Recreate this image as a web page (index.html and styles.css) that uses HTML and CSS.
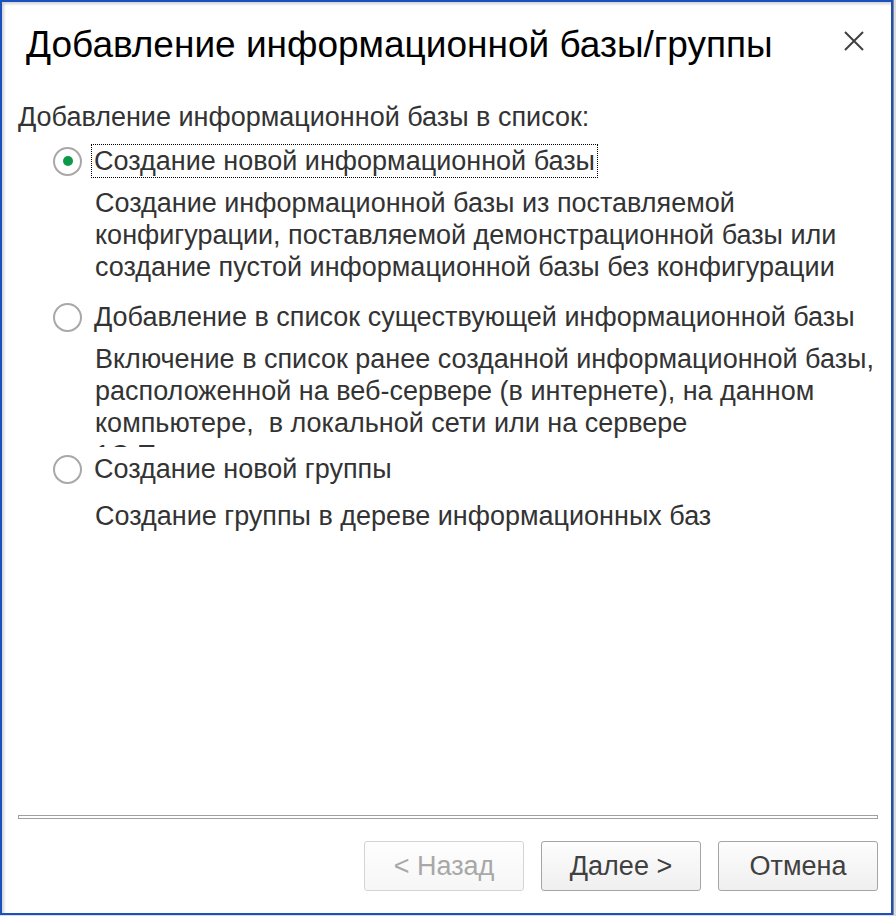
FILE: index.html
```html
<!DOCTYPE html>
<html lang="ru">
<head>
    <meta charset="UTF-8">
    <title>Добавление информационной базы/группы</title>
    <link rel="stylesheet" href="styles.css">
</head>
<body>
    <div class="window">
        <div class="header">
            <h1 class="title">Добавление информационной базы/группы</h1>
            <span class="close-button">
                <svg width="20" height="20" viewBox="0 0 20 20"><path d="M1 1L19 19M19 1L1 19" stroke="#404040" stroke-width="2"/></svg>
            </span>
        </div>

        <div class="content">
            <div class="subtitle">Добавление информационной базы в список:</div>

            <div class="option">
                <div class="option-row">
                    <span class="radio checked"></span>
                    <span class="option-label focused">Создание новой информационной базы</span>
                </div>
                <div class="option-desc">Создание информационной базы из поставляемой<br>конфигурации, поставляемой демонстрационной базы или<br>создание пустой информационной базы без конфигурации</div>
            </div>

            <div class="option">
                <div class="option-row">
                    <span class="radio"></span>
                    <span class="option-label">Добавление в список существующей информационной базы</span>
                </div>
                <!-- текст не помещается и обрезается, как в оригинале -->
                <div class="option-desc clipped">Включение в список ранее созданной информационной базы,<br>расположенной на веб-сервере (в интернете), на данном<br>компьютере,&nbsp; в локальной сети или на сервере<br>1С:Предприятия</div>
            </div>

            <div class="option">
                <div class="option-row">
                    <span class="radio"></span>
                    <span class="option-label">Создание новой группы</span>
                </div>
                <div class="option-desc single">Создание группы в дереве информационных баз</div>
            </div>
        </div>

        <div class="footer">
            <div class="separator"></div>
            <div class="buttons">
                <button class="btn" disabled>&lt; Назад</button>
                <button class="btn">Далее &gt;</button>
                <button class="btn">Отмена</button>
            </div>
        </div>
    </div>
</body>
</html>
```

FILE: styles.css
```css
/* Окно мастера добавления базы */
body {
    margin: 0;
    background-color: #dcdcdc;
    font-family: 'Liberation Sans', Arial, sans-serif;
    color: #333;
}

.window {
    box-sizing: border-box;
    width: 893px;
    height: 915px;
    background: #fff;
    border: 2px solid #1b50bf;
    outline: 1px solid #8a8a8a;
    box-shadow: inset 2px 2px 3px rgba(0, 0, 0, 0.18);
    display: flex;
    flex-direction: column;
}

.header {
    display: flex;
    align-items: center;
    justify-content: space-between;
    padding: 20px 27px 0 24px;
    height: 46px;
}

.title {
    margin: 0;
    font-size: 37px;
    font-weight: normal;
    color: #000;
    line-height: 46px;
}

.close-button {
    display: flex;
    margin-top: -8px;
    cursor: pointer;
}

.content {
    padding: 34px 0 0 16px;
}

.subtitle {
    font-size: 27px;
    line-height: 30px;
    margin-bottom: 12px;
}

.option-row {
    display: flex;
    align-items: center;
    height: 34px;
}

.radio {
    box-sizing: border-box;
    width: 29px;
    height: 29px;
    margin-left: 35px;
    margin-right: 9px;
    border: 2px solid #a8a8a8;
    border-radius: 50%;
    display: flex;
    align-items: center;
    justify-content: center;
}

.radio.checked::after {
    content: '';
    width: 10px;
    height: 10px;
    border-radius: 50%;
    background-color: #0a9a4a;
}

.option-label {
    font-size: 27px;
    line-height: 32px;
    padding: 0 2px;
    border: 1px dotted transparent;
}

.option-label.focused {
    border-color: #000;
}

.option-desc {
    margin: 9px 0 17px 77px;
    max-height: 104px;
    overflow: hidden;
    font-size: 27px;
    line-height: 32px;
}

.option-desc.clipped {
    margin-bottom: 5px;
}

.option-desc.single {
    margin-top: 14px;
}

.footer {
    margin-top: auto;
    padding: 0 13px 22px 16px;
}

.separator {
    height: 2px;
    border: 1px solid #a0a0a0;
    margin-bottom: 22px;
}

.buttons {
    display: flex;
    justify-content: flex-end;
    gap: 17px;
}

.btn {
    width: 160px;
    height: 50px;
    font-family: 'Liberation Sans', Arial, sans-serif;
    font-size: 27px;
    color: #404040;
    background: linear-gradient(#fdfdfd, #efefef);
    border: 1px solid #a5a5a5;
    border-radius: 3px;
    cursor: pointer;
}

.btn:disabled {
    color: #a8a8a8;
    border-color: #d4d4d4;
    background: linear-gradient(#fefefe, #f6f6f6);
    cursor: default;
}
```
